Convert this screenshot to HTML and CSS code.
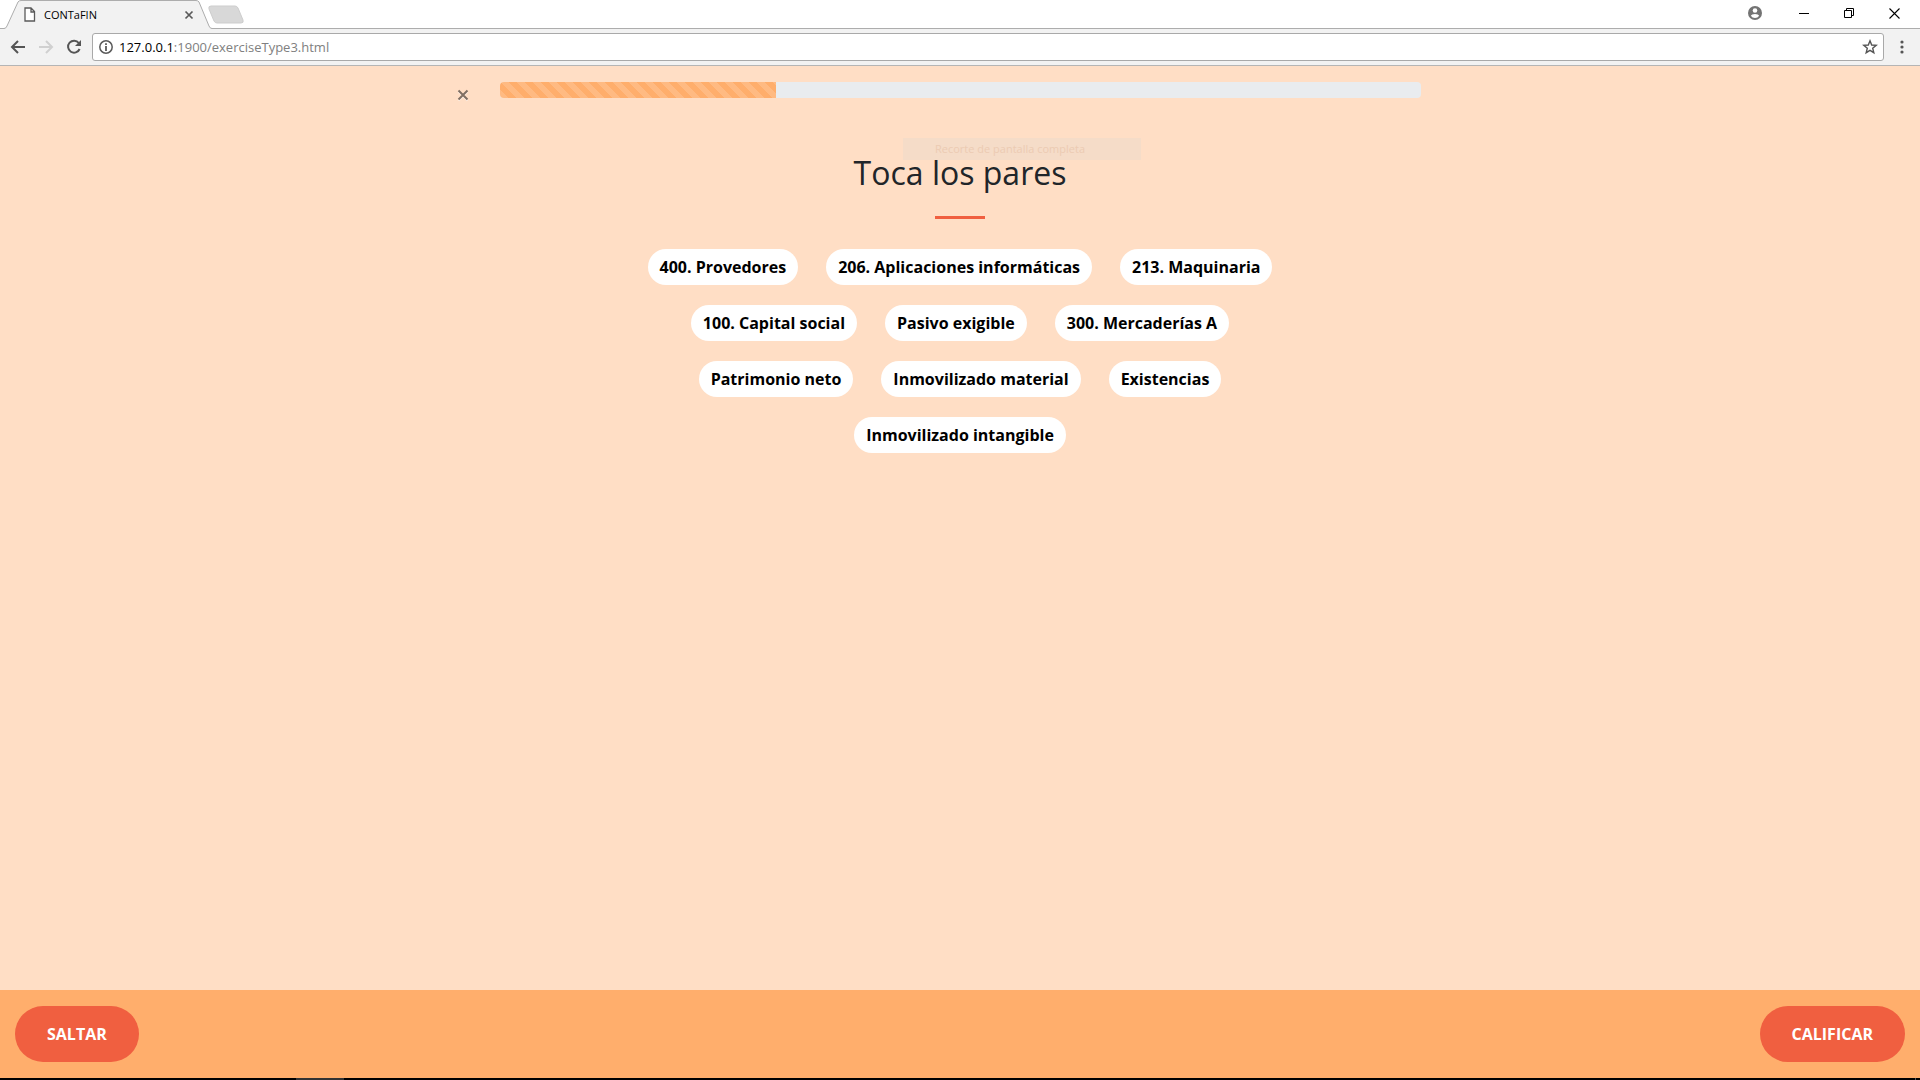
FILE: index.html
```html
<!DOCTYPE html>
<html lang="es">
<head>
<meta charset="utf-8">
<title>CONTaFIN</title>
<link rel="stylesheet" href="styles.css">
</head>
<body>
<header class="browser">
  <div class="tab-strip">
    <div class="tab">
      <svg class="tab-shape" width="216" height="29" viewBox="0 0 216 29" aria-hidden="true"><path d="M0 28.5H4Q6 28.5 7 26L18 2Q19 .5 21 .5H196Q198 .5 199 2L209 26Q210 28.5 212 28.5H216V29H0Z" fill="#f2f2f2"/><path d="M0 28.5H4Q6 28.5 7 26L18 2Q19 .5 21 .5H196Q198 .5 199 2L209 26Q210 28.5 212 28.5H216" fill="none" stroke="#adadad"/></svg>
      <svg class="tab-page" width="12" height="15" viewBox="0 0 12 15" aria-hidden="true"><path d="M1 1h6l3.500 3.500V14H1zM7 1v4h3.500" fill="#fff" stroke="#5a5a5a" stroke-width="1.300"/></svg>
      <span class="tab-title">CONTaFIN</span>
      <button class="icon-button" type="button" aria-label="Cerrar pestaña"><svg width="10" height="10" viewBox="0 0 10 10"><path d="M1.500 1.500l7 7m0-7l-7 7" stroke="#5a5a5a" stroke-width="1.700"/></svg></button>
    </div>
    <button class="icon-button new-tab" type="button" aria-label="Nueva pestaña"><svg width="36" height="19" viewBox="0 0 36 19"><path d="M3 1H27Q29 1 30 3L35 15Q36 18 33 18H9Q7 18 6 16L1 4Q0 1 3 1Z" fill="#d8d8d8" stroke="#cdcdcd"/></svg></button>
    <div class="window-controls">
      <button class="icon-button profile" type="button" aria-label="Perfil"><svg width="14" height="14" viewBox="0 0 14 14"><circle cx="7" cy="7" r="7" fill="#737373"/><circle cx="7" cy="4.500" r="2.300" fill="#fff"/><path d="M2.800 9.700Q3.500 7.900 7 7.900t4.200 1.800Q9.700 12 7 12T2.800 9.700Z" fill="#fff"/></svg></button>
      <button class="icon-button" type="button" aria-label="Minimizar"><svg width="10" height="10" viewBox="0 0 10 10"><path d="M0 5.500h10" stroke="#000"/></svg></button>
      <button class="icon-button" type="button" aria-label="Restaurar"><svg width="10" height="10" viewBox="0 0 10 10"><path d="M.5 2.500h7v7h-7zM2.500 2.500v-2h7v7h-2" fill="none" stroke="#000"/></svg></button>
      <button class="icon-button" type="button" aria-label="Cerrar"><svg width="11" height="11" viewBox="0 0 11 11"><path d="M.5.5l10 10m0-10l-10 10" stroke="#000" stroke-width="1.100"/></svg></button>
    </div>
  </div>
  <div class="toolbar">
    <button class="icon-button" type="button" aria-label="Atrás"><svg width="16" height="14" viewBox="0 0 16 14"><path d="M15 7H2M8 1L2 7l6 6" fill="none" stroke="#555" stroke-width="2"/></svg></button>
    <button class="icon-button" type="button" aria-label="Adelante"><svg width="16" height="14" viewBox="0 0 16 14"><path d="M1 7h13M8 1l6 6-6 6" fill="none" stroke="#d0d0d0" stroke-width="2"/></svg></button>
    <button class="icon-button" type="button" aria-label="Recargar"><svg width="16" height="16" viewBox="0 0 16 16"><path d="M12.800 4A6 6 0 1 0 13.600 10" fill="none" stroke="#555" stroke-width="2"/><path d="M15 1v6H9z" fill="#555"/></svg></button>
    <div class="address">
      <svg width="14" height="14" viewBox="0 0 14 14" aria-hidden="true"><circle cx="7" cy="7" r="6.200" fill="none" stroke="#5a5a5a" stroke-width="1.500"/><path d="M7 6v5M7 3.200v1.700" stroke="#5a5a5a" stroke-width="1.800"/></svg>
      <span class="url"><span class="url-host">127.0.0.1</span>:1900/exerciseType3.html</span>
      <button class="icon-button" type="button" aria-label="Añadir a marcadores"><svg width="16" height="16" viewBox="0 0 16 16"><path d="M8 1.800l1.700 4.200 4.500.3-3.500 2.900 1.100 4.500L8 11.300l-3.800 2.400 1.100-4.500L1.800 6.300l4.500-.3z" fill="none" stroke="#555" stroke-width="1.400"/></svg></button>
    </div>
    <button class="icon-button" type="button" aria-label="Menú"><svg width="4" height="14" viewBox="0 0 4 14"><g fill="#555"><circle cx="2" cy="2" r="1.600"/><circle cx="2" cy="7" r="1.600"/><circle cx="2" cy="12" r="1.600"/></g></svg></button>
  </div>
</header>
<main class="exercise">
  <div class="status">
    <button class="icon-button close-exercise" type="button" aria-label="Salir"><svg width="12" height="13" viewBox="0 0 12 13"><path d="M1.500 2.500l9 9m0-9l-9 9" stroke="#fff" stroke-width="2" opacity=".6"/><path d="M1.500 1.500l9 9m0-9l-9 9" stroke="#806f63" stroke-width="2"/></svg></button>
    <div class="progress" role="progressbar" aria-label="Progreso" aria-valuenow="30" aria-valuemin="0" aria-valuemax="100"><div class="progress-bar" style="width: 30%"></div></div>
  </div>
  <h1 class="title">Toca los pares</h1>
  <hr class="rule">
  <div class="pairs">
    <button class="pair" type="button">400. Provedores</button>
    <button class="pair" type="button">206. Aplicaciones informáticas</button>
    <button class="pair" type="button">213. Maquinaria</button>
    <button class="pair" type="button">100. Capital social</button>
    <button class="pair" type="button">Pasivo exigible</button>
    <button class="pair" type="button">300. Mercaderías A</button>
    <button class="pair" type="button">Patrimonio neto</button>
    <button class="pair" type="button">Inmovilizado material</button>
    <button class="pair" type="button">Existencias</button>
    <button class="pair" type="button">Inmovilizado intangible</button>
  </div>
  <div class="snip-tip">Recorte de pantalla completa</div>
</main>
<footer class="actions">
  <button class="action" type="button">SALTAR</button>
  <button class="action" type="button">CALIFICAR</button>
</footer>
<div class="taskbar"><span class="taskbar-item"></span><span class="taskbar-edge"></span></div>
</body>
</html>
```
FILE: styles.css
```css
* { box-sizing: border-box; }
body {
  margin: 0;
  min-height: 100vh;
  display: flex;
  flex-direction: column;
  background: #ffdec5;
  font: 16px/24px "Open Sans", "Noto Sans", sans-serif;
}
button { font: inherit; border: 0; cursor: pointer; }
svg { display: block; }
.icon-button { padding: 0; background: none; flex: none; }

/* Browser frame */
.browser { border-bottom: 1px solid #b5b5b5; background: #f2f2f2; }
.tab-strip {
  display: flex;
  align-items: center;
  height: 29px;
  background: #fff;
  box-shadow: inset 0 -1px #adadad;
}
.tab {
  position: relative;
  display: flex;
  align-items: center;
  width: 216px;
  height: 29px;
  padding: 0 22px 0 24px;
  gap: 8px;
  font: 11px/16px "Open Sans", sans-serif;
}
.tab-shape { position: absolute; left: 0; top: 0; }
.tab-page, .tab-title, .tab .icon-button { position: relative; }
.tab-title { flex: 1; }
.new-tab { margin-left: -8px; }
.window-controls {
  display: flex;
  align-items: center;
  gap: 35px;
  margin-left: auto;
  padding: 0 20px 3px 0;
}
.profile { margin-right: 2px; }
.toolbar {
  display: flex;
  align-items: center;
  gap: 12px;
  height: 36px;
  padding: 0 10px;
}
.address {
  flex: 1;
  display: flex;
  align-items: center;
  gap: 6px;
  height: 28px;
  margin: 0 -2px;
  padding: 0 5px 0 6px;
  border: 1px solid #a9a9a9;
  border-radius: 3px;
  background: #fff;
}
.toolbar > .icon-button { min-width: 16px; }
.toolbar > .icon-button svg { margin: 0 auto; }
.url { flex: 1; color: #808080; font: 13px/20px "Open Sans", sans-serif; }
.url-host { color: #000; }

/* Exercise */
.exercise { position: relative; flex: 1; padding: 16px 24px; }
.status {
  display: grid;
  grid-template-columns: 1fr minmax(0, 921px) 1fr;
  column-gap: 31px;
  height: 16px;
}
.close-exercise { justify-self: end; align-self: start; margin-top: 7px; }
.progress {
  height: 16px;
  border-radius: 4px;
  background: #e9ecef;
  overflow: hidden;
}
.progress-bar {
  height: 100%;
  background: #ffae6c linear-gradient(45deg, rgba(255, 255, 255, .15) 25%, transparent 25%, transparent 50%, rgba(255, 255, 255, .15) 50%, rgba(255, 255, 255, .15) 75%, transparent 75%, transparent) 0 0 / 16px 16px;
}
.title {
  margin: 56px 0 24px;
  color: #212529;
  font-size: 32px;
  font-weight: 400;
  line-height: 38px;
  text-align: center;
}
.rule { width: 50px; height: 3px; margin: 0 auto 30px; border: 0; background: #f05f40; }
.pairs {
  display: flex;
  flex-wrap: wrap;
  justify-content: center;
  gap: 20px 28px;
  max-width: 690px;
  margin: 0 auto;
}
.pair {
  padding: 6px 12px;
  border-radius: 18px;
  background: #fff;
  color: #000;
  font-weight: 700;
}
.snip-tip {
  position: absolute;
  top: 72px;
  left: calc(50% - 57px);
  width: 238px;
  padding: 0 32px;
  background: #f5dcc8;
  color: #eccbb3;
  font: 11px/22px "Open Sans", sans-serif;
  white-space: nowrap;
}
.actions {
  display: flex;
  justify-content: space-between;
  padding: 16px 15px;
  background: #ffae6c;
}
.action {
  padding: 16px 32px;
  border-radius: 28px;
  background: #f05f40;
  color: #fff;
  font-weight: 700;
}
.taskbar { display: flex; justify-content: space-between; height: 2px; padding: 0 4px 0 296px; background: #000; }
.taskbar-item { width: 48px; background: #333; }
.taskbar-edge { width: 1px; background: #555; }
```
